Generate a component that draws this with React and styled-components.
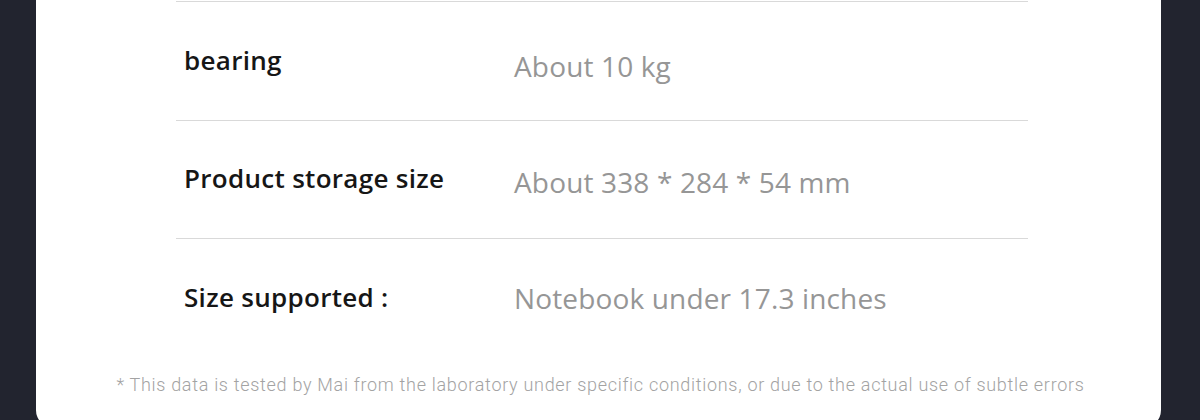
import React from "react";
import styled, { createGlobalStyle } from "styled-components";

const Global = createGlobalStyle`
  html, body { margin: 0; padding: 0; background: #22242f; overflow: hidden; }
  body { font-family: "Open Sans", "Noto Sans", sans-serif; }
`;

const Page = styled.div`
  width: 1200px;
  height: 420px;
  display: flex;
  justify-content: flex-start;
  padding-left: 36px;
  box-sizing: border-box;
`;

const Panel = styled.div`
  width: 1125px;
  height: 428px;
  background: #ffffff;
  border-radius: 0 0 18px 18px;
  display: flex;
  flex-direction: column;
`;

const Table = styled.div`
  margin: 0 133px 0 140px;
  padding-top: 1px;
  display: flex;
  flex-direction: column;
`;

const Row = styled.div`
  height: 118.5px;
  border-top: 1.5px solid #d9d9d9;
  display: flex;
  align-items: center;
  padding-left: 8px;
  box-sizing: border-box;
`;

const Label = styled.div`
  width: 330px;
  flex: none;
  font-size: 26px;
  font-weight: 600;
  letter-spacing: 0.3px;
  color: #161616;
  margin-top: ${(p) => p.$shift || 0}px;
`;

const Value = styled.div`
  font-size: 28px;
  font-weight: 400;
  letter-spacing: 0.15px;
  color: #969696;
  margin-top: ${(p) => p.$shift || 0}px;
`;

const Note = styled.div`
  margin-top: 17px;
  text-align: center;
  font-family: "Roboto", sans-serif;
  font-weight: 300;
  font-size: 18px;
  letter-spacing: 0.7px;
  color: #a3a3a3;
  padding-left: 4px;
`;

const rows = [
  { label: "bearing", value: "About 10 kg", ls: -2, vs: 10 },
  { label: "Product storage size", value: "About 338 * 284 * 54 mm", ls: -2, vs: 6 },
  { label: "Size supported :", value: "Notebook under 17.3 inches", ls: -2, vs: 1 },
];

export default function App() {
  return (
    <>
      <Global />
      <Page>
        <Panel>
          <Table>
            {rows.map((r) => (
              <Row key={r.label}>
                <Label $shift={r.ls}>{r.label}</Label>
                <Value $shift={r.vs}>{r.value}</Value>
              </Row>
            ))}
          </Table>
          <Note>
            * This data is tested by Mai from the laboratory under specific conditions, or due to the actual use of subtle errors
          </Note>
        </Panel>
      </Page>
    </>
  );
}
